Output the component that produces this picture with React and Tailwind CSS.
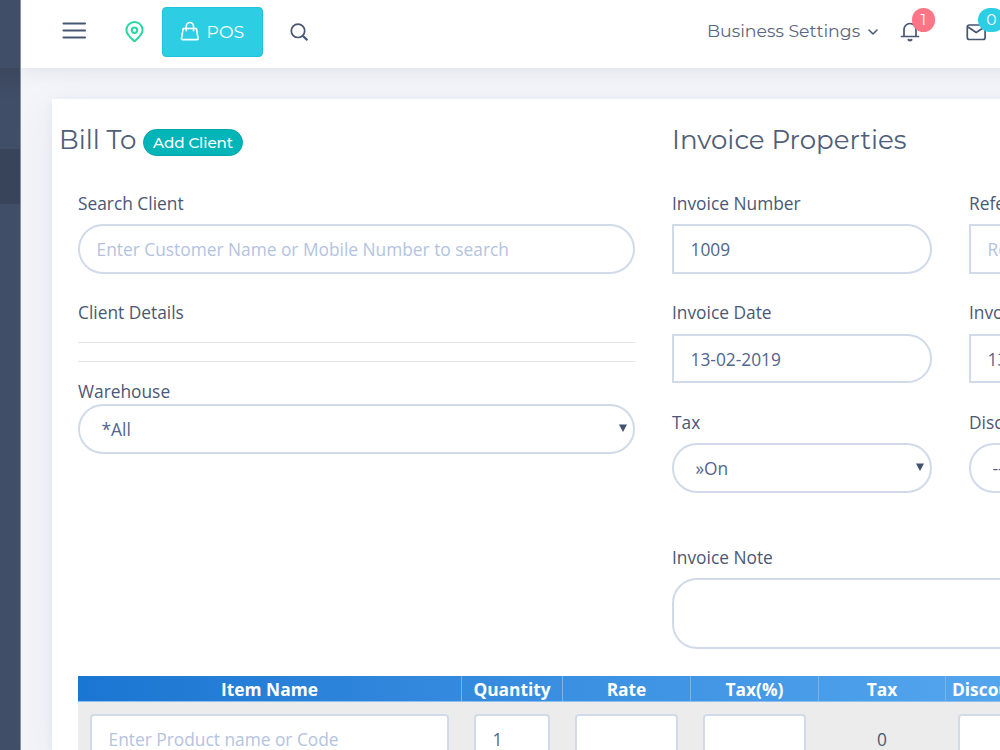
import React, { useState } from 'react'

const inputBase = 'block w-full border-2 border-[#d0dae9] bg-white px-[16.5px] text-[17.33px] text-[#52658c] placeholder-[#b4c3de] outline-none'
const headFont = "font-['Montserrat','Inter',sans-serif]"

const columns = [
  { title: 'Item Name', width: 'w-[384px]', placeholder: 'Enter Product name or Code' },
  { title: 'Quantity', width: 'w-[101px]', value: '1' },
  { title: 'Rate', width: 'w-[128px]', value: '' },
  { title: 'Tax(%)', width: 'w-[128px]', value: '' },
  { title: 'Tax', width: 'w-[127px]', text: '0' },
  { title: 'Discount', width: 'w-[102px]', value: '' }
]

function Label({ children, leading = 'leading-[25px]' }) {
  return <label className={`block h-[26px] text-[17.33px] text-[#4a5875] whitespace-nowrap ${leading}`}>{children}</label>
}

function Field({ label, value, placeholder, leading, className = 'h-[50px]' }) {
  return (
    <div className="w-[260px] shrink-0">
      <Label leading={leading}>{label}</Label>
      <input className={`${inputBase} mt-2 rounded-r-[25px] ${className}`} defaultValue={value} placeholder={placeholder} />
    </div>
  )
}

// select com a seta nativa substituída por um triângulo
function Select({ text }) {
  return (
    <button type="button" className="flex h-[50px] w-full items-center justify-between rounded-[25px] border-2 border-[#d0dae9] bg-white pl-[21.5px] pr-[6.5px] text-left text-[17.33px] text-[#52658c]">
      <span className="pt-px whitespace-nowrap">{text}</span>
      <svg className="-mt-[2px]" width="8" height="8" viewBox="0 0 8 8"><path d="M0 0.5h8L4 8z" fill="#405372" /></svg>
    </button>
  )
}

function Header() {
  return (
    <header className="relative z-10 flex h-[68px] w-[1100px] shrink-0 items-start bg-white shadow-[0_1px_20px_1px_rgba(0,0,0,0.09)] text-[#475671]">
      <svg className="mt-[21px] ml-[41px] shrink-0" width="25" height="20" viewBox="0 0 25 20" stroke="currentColor" strokeWidth="2.1" strokeLinecap="round">
        <path d="M1.500 2.500h21.500M1.500 9.500h21.500M1.500 16.500h21.500" />
      </svg>
      <svg className="mt-[21px] ml-[38px] shrink-0" width="19" height="22" viewBox="0 0 19 22" fill="none" stroke="#28d7a2" strokeWidth="2">
        <path d="M9.500 20.300C7 18.200 1.400 13.600 1.400 9a8.100 8 0 0 1 16.200 0c0 4.600-5.600 9.200-8.100 11.300z" strokeLinejoin="round" />
        <circle cx="9.500" cy="9.300" r="2.700" />
      </svg>
      <button className="mt-[7px] ml-[18px] flex h-[50px] w-[101px] shrink-0 items-center rounded-[4px] border border-[#22c2dc] bg-[#2dcee3] pl-[17px] text-white">
        <svg className="-mt-[3px]" width="20" height="20" viewBox="0 0 20 20" fill="none" stroke="white" strokeWidth="1.600" strokeLinejoin="round" strokeLinecap="round">
          <path d="M3.200 7.500h13.200l1.700 9.900q.1 1.200-1 1.200H2.500q-1.100 0-1-1.200z" />
          <path d="M6.300 9.800V5.100a3.600 3.600 0 0 1 7.200 0v4.700" />
        </svg>
        <span className={`${headFont} ml-[6.500px] text-[17.330px]`}>POS</span>
      </button>
      <svg className="mt-[23px] ml-[27px] shrink-0" width="19" height="19" viewBox="0 0 19 19" fill="none" stroke="currentColor" strokeWidth="1.700" strokeLinecap="round">
        <circle cx="8" cy="7.800" r="6.700" />
        <path d="M13 13l3.800 3.600" strokeWidth="2.200" />
      </svg>
      <div className="ml-[398px] flex h-[62px] shrink-0 items-center">
        <span className={`${headFont} w-[153px] whitespace-nowrap text-[17.330px] text-[#5a6780]`}>Business Settings</span>
        <svg className="mt-[3px] ml-[8px]" width="10" height="7" viewBox="0 0 10 7" fill="none" stroke="currentColor" strokeWidth="1.500" strokeLinecap="round" strokeLinejoin="round"><path d="M1 1l4 4 4-4" /></svg>
      </div>
      <div className="relative mt-[22px] ml-[22px] shrink-0">
        <svg width="20" height="20" viewBox="0 0 20 20" fill="none" stroke="currentColor" strokeWidth="1.700" strokeLinecap="round" strokeLinejoin="round">
          <path d="M1.500 14.500h17M4 14.300V7.500a6 6 0 0 1 12 0v6.800" />
          <path d="M8.500 17.800q1.500 1.500 3 0" strokeWidth="2" />
        </svg>
        <span className={`${headFont} absolute -top-[14px] left-[11.500px] flex h-6 w-[23.500px] items-center justify-center rounded-full bg-[#ff7588] text-[15.500px] text-white`}>1</span>
      </div>
      <div className="relative mt-[23px] ml-[46px] shrink-0">
        <svg width="20" height="18" viewBox="0 0 20 18" fill="none" stroke="currentColor" strokeWidth="1.700" strokeLinejoin="round">
          <rect x="1.300" y="2" width="17.800" height="14.500" rx="2" />
          <path d="M2 4l8.200 5.500L18.500 4" />
        </svg>
        <span className={`${headFont} absolute -top-[15px] left-[12px] flex h-6 w-[27px] items-center justify-center rounded-full bg-[#2dcee3] text-[15.500px] text-white`}>0</span>
      </div>
    </header>
  )
}

function ItemsTable() {
  return (
    <div className="mt-[26px] ml-[26px] w-[970px]">
      <div className="flex h-[26px] border-b border-[#8fbdec] bg-linear-to-r from-[#1976d2] from-0% to-[#64b5f6] to-[125%]">
        {columns.map(c => (
          <div key={c.title} className={`${c.width} shrink-0 border-r border-[#78b3ec] text-center text-[17.330px] leading-[26px] font-bold whitespace-nowrap text-white`}>
            {c.title === 'Discount' ? <span className="block pl-[6px] text-left">{c.title}</span> : c.title}
          </div>
        ))}
      </div>
      <div className="flex h-[75px] bg-[#ececec] pt-[12px]">
        {columns.map(c => (
          <div key={c.title} className={`${c.width} shrink-0 pl-[12px] pr-[13px]`}>
            {c.text
              ? <div className="text-center text-[17.330px] leading-[50px] text-[#4a5875]">{c.text}</div>
              : <input className={`${inputBase} h-[50px] rounded-[4px]`} defaultValue={c.value} placeholder={c.placeholder} />}
          </div>
        ))}
      </div>
    </div>
  )
}

export default function App() {
  const [note, setNote] = useState('')

  return (
    <div className="flex h-[750px] w-[1000px] overflow-hidden bg-[#f4f5fa] font-['Open_Sans',sans-serif]">
      {/* menu lateral recolhido */}
      <aside className="z-20 w-[21px] shrink-0 border-r border-[#8791a2] bg-[#404e67]">
        <div className="h-[68px]" />
        <div className="h-[81px] bg-linear-to-b from-[#3b475f] to-[#404e67] to-40%" />
        <div className="h-[55px] bg-[#38445a]" />
      </aside>

      <div className="flex w-[979px] shrink-0 flex-col overflow-hidden">
        <Header />
        <main className="mt-[31px] ml-[31px] h-[651px] w-[1100px] shrink-0 bg-white shadow-[0_10px_40px_0_rgba(62,57,107,0.07),0_2px_9px_0_rgba(62,57,107,0.06)]">
          <div className="flex h-[551px]">
            <section className="w-[620px] shrink-0 pl-[8px] pr-[37px]">
              <div className="flex h-[91px] items-start">
                <h3 className={`${headFont} mt-[24px] -ml-px w-[84px] text-[26.100px] leading-[35px] whitespace-nowrap text-[#505e78]`}>Bill To</h3>
                <button className={`${headFont} mt-[30px] h-[27px] w-[100px] rounded-full border border-[#00a5a8] bg-[#00b5b8] text-[15.200px] leading-[24px] font-medium tracking-[-0.100px] whitespace-nowrap text-white`}>Add Client</button>
              </div>
              <div className="w-[557px] ml-[18px]">
                <Label leading="leading-[26px]">Search Client</Label>
                <input className={`${inputBase} mt-2 h-[50px] rounded-[25px]`} placeholder="Enter Customer Name or Mobile Number to search" />
                <div className="mt-[26px]"><Label>Client Details</Label></div>
                <hr className="mt-[16px] border-[#e4e4e6]" />
                <hr className="mt-[18px] border-[#e4e4e6]" />
                <div className="mt-[17px]"><Label>Warehouse</Label></div>
                <div className="-mt-px"><Select text="*All" /></div>
              </div>
            </section>

            <section className="w-[557px] shrink-0">
              <h3 className={`${headFont} h-[91px] pt-[24px] text-[26.100px] leading-[35px] whitespace-nowrap text-[#505e78]`}>Invoice Properties</h3>
              <div className="flex gap-[37px]">
                <Field label="Invoice Number" value="1009" leading="leading-[26px]" />
                <Field label="Reference" placeholder="Reference #" leading="leading-[26px]" />
              </div>
              <div className="mt-[26px] flex gap-[37px]">
                <Field label="Invoice Date" value="13-02-2019" className="h-[49px]" />
                <Field label="Invoice Due Date" value="13-02-2019" className="h-[49px]" />
              </div>
              <div className="mt-[26px] flex gap-[37px]">
                <div className="w-[260px] shrink-0">
                  <Label leading="leading-[26px]">Tax</Label>
                  <div className="mt-2"><Select text="»On" /></div>
                </div>
                <div className="w-[260px] shrink-0">
                  <Label leading="leading-[26px]">Discount</Label>
                  <div className="mt-2"><Select text="--Off--" /></div>
                </div>
              </div>
              <div className="mt-[52px]"><Label>Invoice Note</Label></div>
              <textarea value={note} onChange={e => setNote(e.target.value)} className="mt-[7px] block h-[71px] w-full resize-none rounded-[25px] border-2 border-[#d0dae9] px-[17px] text-[17.330px] text-[#52658c] outline-none" />
            </section>
          </div>
          <ItemsTable />
        </main>
      </div>
    </div>
  )
}
